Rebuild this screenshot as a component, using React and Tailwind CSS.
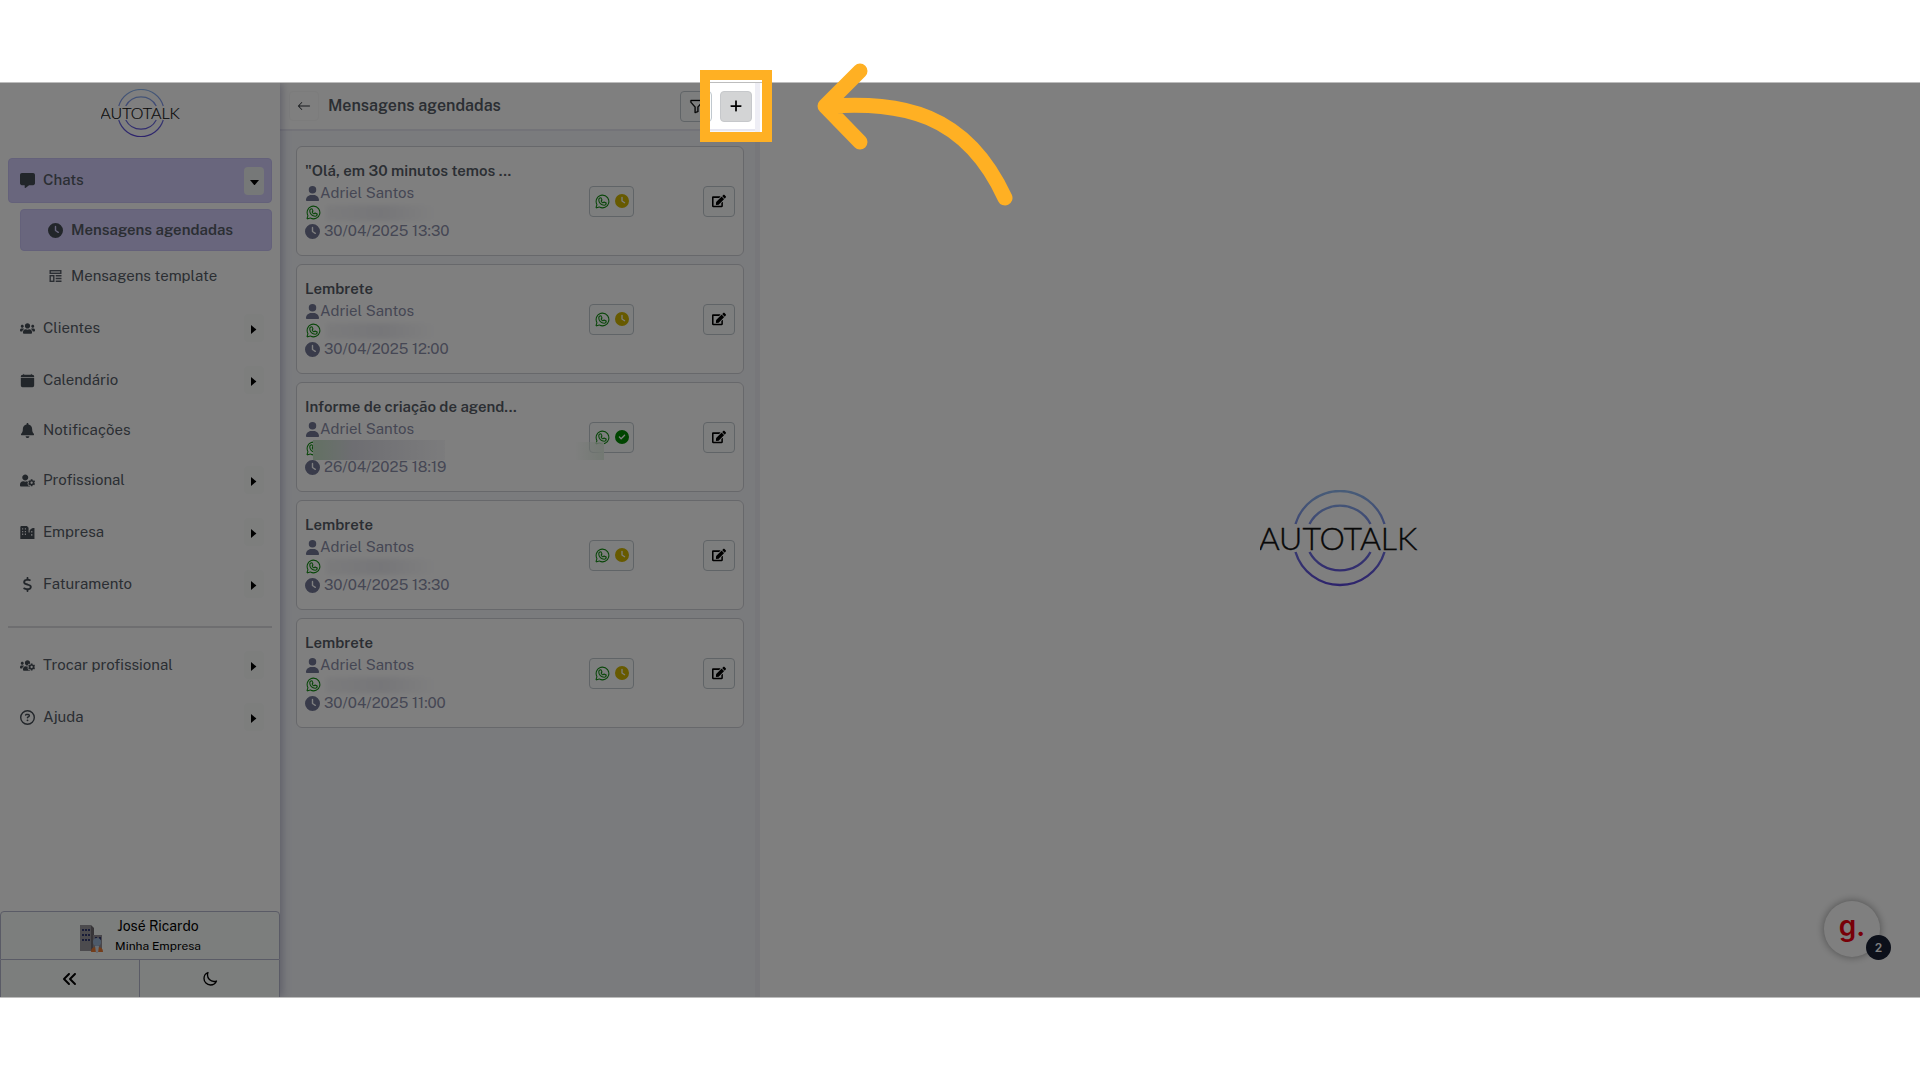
import React from "react";
import { FaMessage, FaClock, FaBell, FaDollarSign, FaRegCircleQuestion, FaUser, FaCircleCheck, FaPlus, FaAnglesLeft } from "react-icons/fa6";
import { FaEdit, FaUsers, FaUserCog, FaUsersCog } from "react-icons/fa";
import { BsArrowLeft, BsFunnel, BsCalendarFill } from "react-icons/bs";
import { HiOutlineMoon } from "react-icons/hi2";
import { PiWhatsappLogo } from "react-icons/pi";

function TemplateIcon({ className }) {
  return (
    <svg viewBox="0 0 12 12" className={className} fill="none" stroke="currentColor" strokeWidth="1.4">
      <rect x="0.7" y="0.7" width="10.6" height="2.6" />
      <rect x="0.7" y="5.7" width="3.6" height="5.6" />
      <path d="M6.200 5.7H12M6.200 8.500H12M6.200 11.300H12" />
    </svg>
  );
}

function CalendarIcon({ className }) {
  return <BsCalendarFill className={className} viewBox="-1 0 18 16" preserveAspectRatio="xMidYMid meet" />;
}

function CompanyIcon({ className }) {
  return (
    <svg viewBox="0 0 14 12" className={className} fill="currentColor">
      <path
        fillRule="evenodd"
        d="M1 0h5.5l1.500 1.500V6h1V4l1.500-1.500L12 1.800h1.500V12H.3V.7zM2 2v1.300h1V2zm2.500 0v1.300h1V2zM2 4.500v1.300h1V4.500zm2.500 0v1.300h1V4.500zM2 7v1.300h1V7zm2.500 0v1.300h1V7zM10.500 4.500V6h1V4.500zm0 3V9h1V7.500z"
      />
    </svg>
  );
}

function Logo({ className, id }) {
  return (
    <svg viewBox="1 1 160 100" className={className} role="img" aria-label="AUTOTALK">
      <defs>
        <linearGradient id={id} gradientUnits="userSpaceOnUse" x1="0" y1="2" x2="0" y2="98">
          <stop offset="0" stopColor="#8fb8f0" />
          <stop offset="1" stopColor="#5a45d8" />
        </linearGradient>
      </defs>
      <g fill="none" stroke={`url(#${id})`} strokeWidth="2.400">
        <path d="M36.500 35A46.500 46.500 0 0 1 125.500 35" />
        <path d="M50.500 35A34.500 34.500 0 0 1 111.500 35" />
        <path d="M36.500 63A46.500 46.500 0 0 0 125.500 63" />
        <path d="M50.500 63A34.500 34.500 0 0 0 111.500 63" />
      </g>
      <text
        x="79"
        y="60.5"
        textAnchor="middle"
        fontFamily="Lato, sans-serif"
        fontWeight="300"
        fontSize="32"
        fill="#111"
        stroke="#111"
        strokeWidth="0.4"
      >
        AUTOTALK
      </text>
    </svg>
  );
}

function Toggle({ open, label }) {
  return (
    <button
      aria-label={label}
      className={`flex h-7 w-5 items-center justify-center rounded ${open ? "bg-[#ecf0f0]" : "bg-[#fafcfb]"}`}
    >
      {open ? (
        <svg viewBox="0 0 10 6" className="mt-1 w-[9px]" fill="#000"><path d="M0 0h10L5 6z" /></svg>
      ) : (
        <svg viewBox="0 0 6 10" className="mt-0.5 h-[9px]" fill="#000"><path d="M0 0v10l6-5z" /></svg>
      )}
    </button>
  );
}

function NavItem({ icon: Icon, label, toggle = true }) {
  return (
    <li className={`flex items-center pr-2 pl-3 ${toggle ? "h-[52px]" : "h-12"}`}>
      <a href="#" className="flex flex-1 items-center gap-2">
        <Icon className="h-[15px] w-[15px] text-[#454c55]" />
        {label}
      </a>
      {toggle && <Toggle label={`Abrir ${label}`} />}
    </li>
  );
}

function Sidebar() {
  return (
    <aside className="z-10 flex w-[280px] shrink-0 flex-col bg-white text-[15px] text-[#565d67] shadow-[2px_0_8px_rgba(80,80,130,0.35)]">
      <div className="flex h-[75px] justify-center pt-[6px]">
        <Logo id="logo-small" className="ml-0.5 h-[50px] w-20" />
      </div>
      <nav className="flex-1 px-2">
        <ul>
          <li className="flex h-[45px] items-center rounded border border-[#c8c2f5] bg-[#d2ccfb] pr-[7px] pl-[11px]">
            <a href="#" className="flex flex-1 items-center gap-2 font-medium">
              <FaMessage className="size-[15px] text-[#454c55]" />
              Chats
            </a>
            <Toggle open label="Fechar Chats" />
          </li>
          <li>
            <ul className="mt-1.5 mb-[5px] ml-3">
              <li className="flex h-[42px] items-center rounded border border-[#c8c2f5] bg-[#d2ccfb] pl-[27px]">
                <a href="#" className="flex items-center gap-2 font-semibold">
                  <FaClock className="size-[15px] text-[#454c55]" />
                  Mensagens agendadas
                </a>
              </li>
              <li className="mt-1 flex h-[42px] items-center pl-7">
                <a href="#" className="flex items-center gap-2">
                  <TemplateIcon className="h-3 w-[15px]" />
                  Mensagens template
                </a>
              </li>
            </ul>
          </li>
          <NavItem icon={FaUsers} label="Clientes" />
          <NavItem icon={CalendarIcon} label="Calendário" />
          <NavItem icon={FaBell} label="Notificações" toggle={false} />
          <NavItem icon={FaUserCog} label="Profissional" />
          <NavItem icon={CompanyIcon} label="Empresa" />
          <NavItem icon={FaDollarSign} label="Faturamento" />
          <li className="mt-4 mb-[11px] border-t-2 border-[#dcdce0]" />
          <NavItem icon={FaUsersCog} label="Trocar profissional" />
          <NavItem icon={FaRegCircleQuestion} label="Ajuda" />
        </ul>
      </nav>
      <footer className="text-black">
        <button className="flex h-[49px] w-full items-center justify-center gap-3 rounded-t border border-[#b4b6cc] bg-[#f9fcfb]">
          <svg viewBox="0 0 24 30" className="mt-1.5 h-[30px] w-6">
            <path d="M1 1h11l3 3v23H1z" fill="#6e6a70" />
            <path d="M1 1h11v26H1z" fill="#99969c" />
            <path d="M3 5h2v2H3zm3 0h2v2H6zm3 0h2v2H9zM3 10h2v2H3zm3 0h2v2H6zm3 0h2v2H9zM3 15h2v2H3zm3 0h2v2H6zm3 0h2v2H9z" fill="#333b70" />
            <path d="M14 11h9v16h-9z" fill="#928f96" />
            <path d="M16 13h2v3h-2zm4 0h2v3h-2z" fill="#333b70" />
            <circle cx="18" cy="18" r="4" fill="#9bb5d4" />
            <path d="M12 28q0-5 5-5l1 4 1-4q5 0 5 5z" fill="#e87a35" />
            <path d="M16 22h4l-1 7h-2z" fill="#d4dce6" />
          </svg>
          <span className="flex flex-col text-center">
            <span className="text-sm leading-5">José Ricardo</span>
            <span className="text-xs leading-5">Minha Empresa</span>
          </span>
        </button>
        <div className="grid grid-cols-2 divide-x divide-[#b4b6cc] border-x border-[#b4b6cc] bg-[#f9fcfb]">
          <button aria-label="Recolher menu" className="flex h-[37px] items-center justify-center">
            <FaAnglesLeft className="size-4" />
          </button>
          <button aria-label="Modo escuro" className="flex h-[37px] items-center justify-center">
            <HiOutlineMoon className="size-4" strokeWidth="2" />
          </button>
        </div>
      </footer>
    </aside>
  );
}

const messages = [
  { title: '"Olá, em 30 minutos temos ...', date: "30/04/2025 13:30" },
  { title: "Lembrete", date: "30/04/2025 12:00" },
  { title: "Informe de criação de agend...", date: "26/04/2025 18:19", sent: true },
  { title: "Lembrete", date: "30/04/2025 13:30" },
  { title: "Lembrete", date: "30/04/2025 11:00" },
];

function MessageCard({ title, date, sent }) {
  return (
    <li className="flex h-[110px] items-center rounded-md border border-[#cfd0d6] bg-white px-2 text-[15px] text-[#8b8ea8]">
      <div className="min-w-0 flex-1 pb-px">
        <h2 className="truncate leading-[22px] font-semibold text-[#565d67]">{title}</h2>
        <p className="flex items-center leading-[22px]">
          <FaUser className="size-[15px] text-[#727795]" />
          Adriel Santos
        </p>
        <p className="relative flex h-[17px] items-center">
          <PiWhatsappLogo className="size-[17px] text-[#108c10]" />
          {sent ? (
            <span className="absolute top-0 left-2 h-5 w-[132px] bg-linear-to-r from-[#c6e2c6] via-[#dcdce4] via-30% to-[#f8f8fa]" />
          ) : (
            <span className="ml-1 h-4 w-28 bg-linear-to-r from-[#f6f6f8] via-[#ededf2] to-white blur-[2px]" />
          )}
        </p>
        <p className="flex items-center gap-1 leading-5">
          <FaClock className="size-[15px] text-[#727795]" />
          {date}
        </p>
      </div>
      <div className="relative mr-[69px] flex h-[31px] w-[45px] items-center justify-center gap-1 rounded border border-[#c0c8ce] bg-[#fbfdfd]">
        <PiWhatsappLogo className="size-[17px] text-[#108c10]" />
        {sent ? (
          <FaCircleCheck className="size-[14px] text-[#008a00]" />
        ) : (
          <FaClock className="size-[14px] text-[#ceb400]" />
        )}
        {sent && (
          <span className="absolute -bottom-2 -left-4 h-[18px] w-[30px] bg-linear-to-l from-[#e6f2e6] to-transparent" />
        )}
      </div>
      <button
        aria-label="Editar mensagem"
        className="flex h-[31px] w-8 items-center justify-center rounded border border-[#c0c8ce] bg-[#fbfdfd] text-black"
      >
        <FaEdit className="size-[14px]" />
      </button>
    </li>
  );
}

function MessageList() {
  return (
    <section className="flex w-[480px] shrink-0 flex-col border-r-[5px] border-[#eeeef5] bg-[#f4f6fb]">
      <header className="flex h-12 items-center border-b-2 border-[#e6e6f0] bg-white pr-[3px] pl-[9px]">
        <button aria-label="Voltar" className="flex h-[30px] w-[30px] items-center justify-center rounded border border-[#f8f8f8] text-[#30353b]">
          <BsArrowLeft className="size-[14px]" />
        </button>
        <h1 className="ml-[9px] flex-1 text-base font-semibold text-[#565d67]">Mensagens agendadas</h1>
        <button aria-label="Filtrar" className="mr-2 flex h-[31px] w-8 items-center justify-center rounded border border-[#c0c8ce] bg-[#fbfdfd] text-black">
          <BsFunnel className="size-[15px]" strokeWidth="0.4" />
        </button>
        <button aria-label="Nova mensagem" className="flex h-[31px] w-8 items-center justify-center rounded border border-[#c6c8cb] bg-[#d3d4d5] text-black">
          <FaPlus className="size-[14px]" />
        </button>
      </header>
      <ul className="flex flex-col gap-2 pt-[15px] pr-[11px] pl-4">
        {messages.map((m, i) => <MessageCard key={i} {...m} />)}
      </ul>
    </section>
  );
}

export default function App() {
  return (
    <div className="relative flex min-h-screen flex-col bg-white py-[82px] font-['Public_Sans','Inter',sans-serif]">
      <div className="relative flex flex-1 overflow-hidden border-y border-[#bdbdbd]">
        <Sidebar />
        <MessageList />
        <main className="flex flex-1 items-center justify-center bg-white">
          <Logo id="logo-large" className="h-[100px] w-40" />
        </main>
        <button
          aria-label="Abrir guia"
          className="absolute right-10 bottom-10 flex size-14 items-center justify-center rounded-full bg-white font-['Inter',sans-serif] text-[28px] leading-none font-semibold text-[#f00010] shadow-[0_0_8px_rgba(0,0,0,0.4)]"
        >
          <span className="mb-1.5">g.</span>
          <span className="absolute -right-[11px] -bottom-[3px] flex size-[25px] items-center justify-center rounded-full bg-[#182034] text-xs text-white">
            2
          </span>
        </button>
        <div className="pointer-events-none absolute -top-[3px] left-[710px] z-20 h-[52px] w-[52px] shadow-[0_0_0_4000px_rgba(0,0,0,0.5)]" />
      </div>
      <div className="pointer-events-none absolute top-[70px] left-[700px] z-30 size-[72px] border-10 border-[#ffb023]" />
      <svg
        viewBox="0 0 200 150"
        className="pointer-events-none absolute top-[60px] left-[815px] z-30 h-[150px] w-[200px]"
        fill="none"
        stroke="#ffb023"
        strokeWidth="15"
        strokeLinecap="round"
        strokeLinejoin="round"
      >
        <path d="M45 11 10 46 45 82M15 46C85 42 150 51 190 138" />
      </svg>
    </div>
  );
}
